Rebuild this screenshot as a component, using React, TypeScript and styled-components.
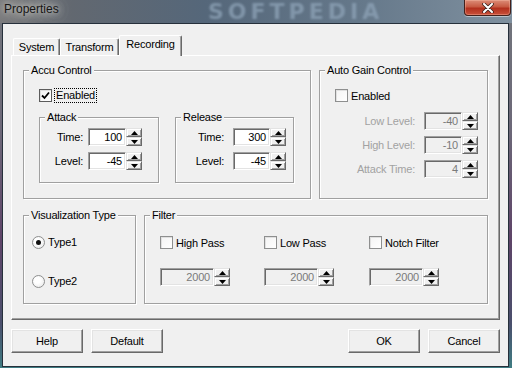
import React from 'react';
import styled, { createGlobalStyle } from 'styled-components';

const GlobalStyle = createGlobalStyle`
  html, body {
    margin: 0;
    padding: 0;
  }

  body {
    background: #56626e;
    color: #000;
    font-family: "Liberation Sans", Arial, sans-serif;
    font-size: 11px;
    letter-spacing: -0.2px;
  }

  * {
    box-sizing: border-box;
  }
`;

const Window = styled.div`
  width: 512px;
  height: 368px;
  display: flex;
  flex-direction: column;
  overflow: hidden;
  background: linear-gradient(180deg, #72767c 0%, #6c6878 35%, #5e4468 65%, #4a4f6c 88%, #3f7c82 100%);
`;

const TitleBar = styled.div`
  position: relative;
  flex: none;
  height: 23px;
  display: flex;
  justify-content: space-between;
  align-items: flex-start;
  padding: 0 1px 0 4px;
  overflow: hidden;
  background: linear-gradient(90deg, #7a7a7c 0%, #626870 14%, #55677a 40%, #65788a 70%, #7f909f 100%);
`;

const TitleText = styled.div`
  position: relative;
  z-index: 1;
  padding-top: 2px;
  font-size: 12px;
  line-height: 15px;
  letter-spacing: 0;
  color: #161616;
  text-shadow: 0 0 6px rgba(230, 228, 220, 0.95), 0 0 12px rgba(220, 218, 210, 0.9), 0 0 18px rgba(200, 198, 192, 0.7);
`;

const Watermark = styled.div`
  position: absolute;
  left: 208px;
  top: 1px;
  font-family: "DejaVu Sans", sans-serif;
  font-weight: bold;
  font-size: 22px;
  line-height: 22px;
  letter-spacing: 4px;
  color: #8ea3b7;
  opacity: 0.75;
  filter: blur(1px);
  pointer-events: none;
`;

const CloseButton = styled.div`
  position: relative;
  z-index: 1;
  width: 47px;
  height: 16px;
  display: flex;
  align-items: center;
  justify-content: center;
  border: 1px solid #43201b;
  border-top: none;
  border-radius: 0 0 4px 4px;
  background: linear-gradient(180deg, #dc8d78 0%, #c75a42 45%, #b2301d 55%, #c9503a 100%);
  box-shadow: 0 1px 0 rgba(255, 255, 255, 0.45), inset 0 0 0 1px rgba(255, 200, 180, 0.35);
`;

const Frame = styled.div`
  flex: 1;
  display: flex;
  padding: 0 3px 1px 2px;
`;

const Client = styled.div`
  flex: 1;
  display: flex;
  flex-direction: column;
  padding: 11px 8px 0;
  background: #f0f0f0;
  border: 1px solid #26303b;
`;

const TabStrip = styled.div`
  height: 20px;
  display: flex;
  align-items: flex-end;
  padding-left: 2px;
`;

const Tab = styled.div<{ $w: number; $active?: boolean }>`
  position: relative;
  z-index: ${p => (p.$active ? 1 : 0)};
  width: ${p => p.$w}px;
  height: ${p => (p.$active ? 21 : 17)}px;
  margin-bottom: ${p => (p.$active ? -1 : 0)}px;
  padding-top: 2px;
  line-height: 13px;
  text-align: center;
  background: #f0f0f0;
  border-top: 1px solid #fff;
  border-left: 1px solid #fff;
  border-right: 1px solid #696969;
  border-radius: 2px 2px 0 0;
  box-shadow: inset -1px 0 0 #a0a0a0;
`;

const Panel = styled.div`
  height: 265px;
  display: grid;
  grid-template-rows: 135px 95px;
  row-gap: 10px;
  padding: 8px 11px 0;
  border-top: 1px solid #fff;
  border-left: 1px solid #fff;
  border-right: 1px solid #696969;
  border-bottom: 1px solid #696969;
  box-shadow: inset -1px -1px 0 #a0a0a0;
`;

const Row = styled.div<{ $cols: string }>`
  display: grid;
  grid-template-columns: ${p => p.$cols};
  column-gap: 8px;
`;

const Group = styled.fieldset`
  margin: 0;
  padding: 0;
  min-width: 0;
  border: 1px solid #a0a0a0;
  box-shadow: inset 1px 1px 0 #fff, 1px 1px 0 #fff;
`;

const Legend = styled.legend`
  margin-left: 5px;
  padding: 0 2px;
  line-height: 13px;
  background: #f0f0f0;
`;

const GroupBody = styled.div<{ $pad: string }>`
  display: flex;
  flex-direction: column;
  padding: ${p => p.$pad};
`;

const SubRow = styled.div`
  display: grid;
  grid-template-columns: 120px 119px;
  column-gap: 16px;
  margin-top: 8px;
  height: 72px;
`;

const CheckRow = styled.label`
  height: 15px;
  display: flex;
  align-items: center;
  gap: 3px;
`;

const CheckBox = styled.span<{ $focus?: boolean }>`
  width: 13px;
  height: 13px;
  display: flex;
  align-items: center;
  justify-content: center;
  border: 1px solid ${p => (p.$focus ? '#5c5c5c' : '#8e8f8f')};
  background: linear-gradient(135deg, #f4f4f4, #fff);
  box-shadow: inset 1px 1px 0 #e0e0e0;
`;

const FocusText = styled.span`
  padding: 0 1px;
  line-height: 13px;
  outline: 1px dotted #000;
  outline-offset: 0;
`;

const FieldGrid = styled.div<{ $cols: string; $gap: number; $top: number }>`
  display: grid;
  grid-template-columns: ${p => p.$cols};
  grid-auto-rows: 18px;
  column-gap: ${p => p.$gap}px;
  row-gap: 6px;
  margin-top: ${p => p.$top}px;
`;

const FieldLabel = styled.span<{ $disabled?: boolean }>`
  line-height: 18px;
  text-align: right;
  white-space: nowrap;
  color: ${p => (p.$disabled ? '#a2a2a2' : '#000')};
`;

const SpinBox = styled.div<{ $w: number }>`
  width: ${p => p.$w}px;
  height: 18px;
  display: flex;
`;

const Edit = styled.div<{ $disabled?: boolean }>`
  flex: 1;
  padding-right: 3px;
  line-height: 16px;
  text-align: right;
  color: ${p => (p.$disabled ? '#7a7a7a' : '#000')};
  background: ${p => (p.$disabled ? '#f0f0f0' : '#fff')};
  border: 1px solid;
  border-color: #a0a0a0 #fff #fff #a0a0a0;
  box-shadow: inset 1px 1px 0 #696969, inset -1px -1px 0 #e3e3e3;
`;

const UpDown = styled.div`
  width: 16px;
  display: flex;
  flex-direction: column;
`;

const SpinButton = styled.div`
  flex: 1;
  display: flex;
  align-items: center;
  justify-content: center;
  background: #f0f0f0;
  border: 1px solid;
  border-color: #e3e3e3 #696969 #696969 #e3e3e3;
  box-shadow: inset 1px 1px 0 #fff, inset -1px -1px 0 #a0a0a0;
`;

const RadioRow = styled.label<{ $top: number }>`
  height: 16px;
  display: flex;
  align-items: center;
  gap: 3px;
  margin-top: ${p => p.$top}px;
`;

const Radio = styled.span<{ $on?: boolean }>`
  width: 13px;
  height: 13px;
  display: flex;
  align-items: center;
  justify-content: center;
  border: 1px solid #8e8f8f;
  border-radius: 50%;
  background: radial-gradient(circle at 40% 40%, #fff 30%, #e4e4e4 100%);

  &::after {
    content: '';
    width: 5px;
    height: 5px;
    border-radius: 50%;
    background: ${p => (p.$on ? '#111' : 'transparent')};
  }
`;

const FilterGrid = styled.div`
  display: grid;
  grid-template-columns: 104px 105px 105px;
  row-gap: 18px;
`;

const ButtonBar = styled.div`
  display: flex;
  justify-content: space-between;
  margin-top: 9px;
`;

const ButtonGroup = styled.div`
  display: flex;
  gap: 8px;
`;

const Button = styled.div`
  width: 72px;
  height: 24px;
  display: flex;
  align-items: center;
  justify-content: center;
  background: #f0f0f0;
  border: 1px solid;
  border-color: #fff #696969 #696969 #fff;
  box-shadow: inset -1px -1px 0 #a0a0a0, inset 1px 1px 0 #e3e3e3;
`;

function Arrow ({ down }: { down?: boolean }) {
  return (
    <svg width='7' height='4' viewBox='0 0 7 4'>
      <polygon points={down ? '0,0 7,0 3.5,4' : '0,4 7,4 3.5,0'} fill='#000' />
    </svg>
  );
}

function Spin ({ value, w, disabled }: { value: string; w: number; disabled?: boolean }) {
  return (
    <SpinBox $w={w}>
      <Edit $disabled={disabled}>{value}</Edit>
      <UpDown>
        <SpinButton><Arrow /></SpinButton>
        <SpinButton><Arrow down /></SpinButton>
      </UpDown>
    </SpinBox>
  );
}

function Check ({ checked, focus }: { checked?: boolean; focus?: boolean }) {
  return (
    <CheckBox $focus={focus}>
      {checked && (
        <svg width='9' height='9' viewBox='0 0 9 9'>
          <polyline points='1,4.5 3.5,7 8,1.5' fill='none' stroke='#000' strokeWidth='1.8' />
        </svg>
      )}
    </CheckBox>
  );
}

export default function App () {
  return (
    <>
      <GlobalStyle />
      <Window>
        <TitleBar>
          <Watermark>SOFTPEDIA</Watermark>
          <TitleText>Properties</TitleText>
          <CloseButton>
            <svg width='12' height='10' viewBox='0 0 12 10'>
              <path d='M2 1 L10 9 M10 1 L2 9' stroke='#3b2420' strokeWidth='3.6' strokeLinecap='round' />
              <path d='M2 1 L10 9 M10 1 L2 9' stroke='#fff' strokeWidth='2' strokeLinecap='round' />
            </svg>
          </CloseButton>
        </TitleBar>
        <Frame>
          <Client>
            <TabStrip>
              <Tab $w={47}>System</Tab>
              <Tab $w={59}>Transform</Tab>
              <Tab $w={63} $active>Recording</Tab>
            </TabStrip>
            <Panel>
              <Row $cols='288px 169px'>
                <Group>
                  <Legend>Accu Control</Legend>
                  <GroupBody $pad='11px 0 0 15px'>
                    <CheckRow>
                      <Check checked focus />
                      <FocusText>Enabled</FocusText>
                    </CheckRow>
                    <SubRow>
                      <Group>
                        <Legend>Attack</Legend>
                        <FieldGrid $cols='43px 54px' $gap={5} $top={4}>
                          <FieldLabel>Time:</FieldLabel>
                          <Spin value='100' w={54} />
                          <FieldLabel>Level:</FieldLabel>
                          <Spin value='-45' w={54} />
                        </FieldGrid>
                      </Group>
                      <Group>
                        <Legend>Release</Legend>
                        <FieldGrid $cols='48px 53px' $gap={9} $top={4}>
                          <FieldLabel>Time:</FieldLabel>
                          <Spin value='300' w={53} />
                          <FieldLabel>Level:</FieldLabel>
                          <Spin value='-45' w={53} />
                        </FieldGrid>
                      </Group>
                    </SubRow>
                  </GroupBody>
                </Group>
                <Group>
                  <Legend>Auto Gain Control</Legend>
                  <GroupBody $pad='11px 0 0 15px'>
                    <CheckRow>
                      <Check />
                      <span>Enabled</span>
                    </CheckRow>
                    <FieldGrid $cols='80px 54px' $gap={9} $top={9}>
                      <FieldLabel $disabled>Low Level:</FieldLabel>
                      <Spin value='-40' w={54} disabled />
                      <FieldLabel $disabled>High Level:</FieldLabel>
                      <Spin value='-10' w={54} disabled />
                      <FieldLabel $disabled>Attack Time:</FieldLabel>
                      <Spin value='4' w={54} disabled />
                    </FieldGrid>
                  </GroupBody>
                </Group>
              </Row>
              <Row $cols='113px 344px'>
                <Group>
                  <Legend>Visualization Type</Legend>
                  <GroupBody $pad='0 0 0 8px'>
                    <RadioRow $top={12}>
                      <Radio $on />
                      <span>Type1</span>
                    </RadioRow>
                    <RadioRow $top={23}>
                      <Radio />
                      <span>Type2</span>
                    </RadioRow>
                  </GroupBody>
                </Group>
                <Group>
                  <Legend>Filter</Legend>
                  <GroupBody $pad='13px 0 0 15px'>
                    <FilterGrid>
                      <CheckRow><Check /><span>High Pass</span></CheckRow>
                      <CheckRow><Check /><span>Low Pass</span></CheckRow>
                      <CheckRow><Check /><span>Notch Filter</span></CheckRow>
                      <Spin value='2000' w={70} disabled />
                      <Spin value='2000' w={70} disabled />
                      <Spin value='2000' w={70} disabled />
                    </FilterGrid>
                  </GroupBody>
                </Group>
              </Row>
            </Panel>
            <ButtonBar>
              <ButtonGroup>
                <Button>Help</Button>
                <Button>Default</Button>
              </ButtonGroup>
              <ButtonGroup>
                <Button>OK</Button>
                <Button>Cancel</Button>
              </ButtonGroup>
            </ButtonBar>
          </Client>
        </Frame>
      </Window>
    </>
  );
}
